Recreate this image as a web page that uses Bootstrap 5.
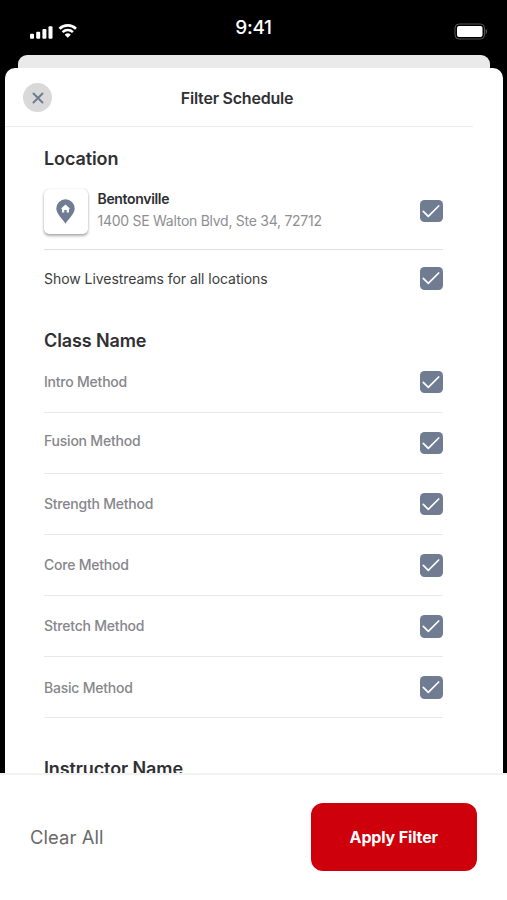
<!DOCTYPE html>
<html lang="en">
<head>
<meta charset="utf-8">
<meta name="viewport" content="width=device-width, initial-scale=1">
<title>Filter Schedule</title>
<link href="https://cdn.jsdelivr.net/npm/bootstrap@5.3.0/dist/css/bootstrap.min.css" rel="stylesheet">
<style>
body{font-family:Inter,"Liberation Sans",sans-serif;background:#000;color:#303033;height:900px}
.status{height:55px;color:#fff;padding:0 19.5px}
.status-side{flex:1 1 0}
.signals svg{margin-left:10.5px}
.clock{font-size:19px;font-weight:500;line-height:55px;letter-spacing:-.3px}
.back-sheet{height:13px;margin:0 17px 0 18px;background:#eaeaea;border-radius:9px 9px 0 0}
.sheet{height:705px;margin:0 4px 0 5px;background:#fff;border-radius:10px 10px 0 0}
.sheet-head{height:59px;width:468px;border-bottom:1.5px solid #ebebec;padding:1px 51px 0 18px}
.close-btn{width:29px;height:29px;background:#d9d9d9}
.sheet-title{font-size:16px;font-weight:600;letter-spacing:-.22px;padding-top:2px}
.sheet-body{width:437.5px;padding:21px 0 0 39px}
.section-title{font-size:18px;font-weight:600;line-height:22px;margin:0;letter-spacing:-.11px}
.class-title{margin-top:23px}
.instructor-title{padding-top:40px}
.option{height:61.1px;padding-top:1px;border-bottom:1.5px solid #e9e9ea;font-size:14px;font-weight:500;color:#86868b;line-height:20px;letter-spacing:-.22px}
.place{height:74.5px;padding-top:0;margin-top:5px;border-bottom-width:1px;border-color:#e0e0e1}
.place .tick{margin-bottom:2px}
.live{height:57px;border:0;font-weight:400;color:#3c3c40;letter-spacing:-.05px}
.place-icon{width:44px;height:45px;margin-right:9.5px;border-radius:5px;background:#fff;box-shadow:0 2px 3px rgba(0,0,0,.32),0 0 1px rgba(0,0,0,.25)}
.place-name{color:#2d2d30;font-weight:600;letter-spacing:-.33px;padding-bottom:2px}
.place-text{padding-bottom:4px}
.place-address{font-weight:400;color:#8e8e93;letter-spacing:-.27px}
.tick{width:22.5px;height:22.5px;border-radius:4.5px;background:#6f7c92}
.footer-bar{height:127px;background:#fff;border-top:2px solid #f2f2f3;padding:0 30px 2px 30px}
.clear{font-size:18.4px;color:#6a6a6a;letter-spacing:.08px}
.clear span{display:block;padding-top:2px}
.apply,.apply:hover{width:166.5px;height:68px;border-radius:12px;background:#ce000c;color:#fff;font-size:16px;font-weight:700;letter-spacing:-.15px}
</style>
</head>
<body class="overflow-hidden">
<header class="status d-flex align-items-center">
  <div class="status-side signals d-flex align-items-center pt-2">
    <svg width="50" height="16" viewBox="0 0.5 50 16" fill="#fff"><rect x="0" y="10.2" width="4" height="5" rx="1"/><rect x="6.2" y="8.200" width="4" height="7" rx="1"/><rect x="12.4" y="5.400" width="4" height="9.8" rx="1"/><rect x="18.5" y="2.700" width="4" height="12.5" rx="1"/><g transform="translate(0 -.5)"><g fill="none" stroke="#fff" stroke-width="2.600"><path d="M29.500 5.700a11.800 11.800 0 0 1 16.500 0"/><path d="M32.600 9.100a7.400 7.400 0 0 1 10.300 0"/></g><path d="M37.750 14.800L34.700 11.800a4.400 4.400 0 0 1 6.100 0z"/></g></svg>
  </div>
  <div class="clock">9:41</div>
  <div class="status-side d-flex justify-content-end pt-2"><svg class="d-block" width="34" height="18" viewBox="0 0 34 18"><rect x="1" y="1" width="29.500" height="15" rx="4" fill="none" stroke="#555" stroke-width="1"/><rect x="3" y="3" width="25.500" height="11" rx="2" fill="#fff"/><path d="M31.700 6c1.600.6 1.600 4.400 0 5z" fill="#666"/></svg></div>
</header>
<div class="back-sheet"></div>
<main class="sheet overflow-hidden">
  <div class="sheet-head d-flex align-items-center">
    <button class="close-btn btn rounded-circle p-0 border-0 d-flex align-items-center justify-content-center" aria-label="Close"><svg width="12" height="12" viewBox="0 0 12 12" fill="none" stroke="#6f7c92" stroke-width="2" stroke-linecap="round"><path d="M1.500 1.500l9 9M10.500 1.500l-9 9"/></svg></button>
    <h1 class="sheet-title mb-0 flex-grow-1 text-center">Filter Schedule</h1>
  </div>
  <div class="sheet-body">
    <h2 class="section-title">Location</h2>
    <div class="option place d-flex align-items-center">
      <div class="place-icon d-flex align-items-center justify-content-center"><svg width="20" height="26" viewBox="0.5 0.3 20 26"><path d="M10 25C7.500 20.500.8 15 .8 9.700a9.200 9.200 0 0 1 18.400 0C19.200 15 12.500 20.500 10 25z" fill="#6f7c92"/><path d="M10 5.800l4.700 4.200h-1.200v3.700h-2.300v-2.400H8.800v2.400H6.500V10H5.300z" fill="#fff"/></svg></div>
      <div class="place-text flex-grow-1"><div class="place-name">Bentonville</div><div class="place-address">1400 SE Walton Blvd, Ste 34, 72712</div></div>
      <span class="tick"><svg class="d-block" width="22" height="22" viewBox="0 0 22 22" fill="none" stroke="#fff" stroke-width="1.700" stroke-linecap="round" stroke-linejoin="round"><path d="M3.300 11.400l5 5L18.700 6"/></svg></span>
    </div>
    <div class="option live d-flex align-items-center justify-content-between"><span>Show Livestreams for all locations</span><span class="tick"><svg class="d-block" width="22" height="22" viewBox="0 0 22 22" fill="none" stroke="#fff" stroke-width="1.700" stroke-linecap="round" stroke-linejoin="round"><path d="M3.300 11.400l5 5L18.700 6"/></svg></span></div>
    <h2 class="section-title class-title">Class Name</h2>
    <div class="option d-flex align-items-center justify-content-between"><span>Intro Method</span><span class="tick"><svg class="d-block" width="22" height="22" viewBox="0 0 22 22" fill="none" stroke="#fff" stroke-width="1.700" stroke-linecap="round" stroke-linejoin="round"><path d="M3.300 11.400l5 5L18.700 6"/></svg></span></div>
    <div class="option d-flex align-items-center justify-content-between"><span class="pb-1">Fusion Method</span><span class="tick"><svg class="d-block" width="22" height="22" viewBox="0 0 22 22" fill="none" stroke="#fff" stroke-width="1.700" stroke-linecap="round" stroke-linejoin="round"><path d="M3.300 11.400l5 5L18.700 6"/></svg></span></div>
    <div class="option d-flex align-items-center justify-content-between"><span>Strength Method</span><span class="tick"><svg class="d-block" width="22" height="22" viewBox="0 0 22 22" fill="none" stroke="#fff" stroke-width="1.700" stroke-linecap="round" stroke-linejoin="round"><path d="M3.300 11.400l5 5L18.700 6"/></svg></span></div>
    <div class="option d-flex align-items-center justify-content-between"><span>Core Method</span><span class="tick"><svg class="d-block" width="22" height="22" viewBox="0 0 22 22" fill="none" stroke="#fff" stroke-width="1.700" stroke-linecap="round" stroke-linejoin="round"><path d="M3.300 11.400l5 5L18.700 6"/></svg></span></div>
    <div class="option d-flex align-items-center justify-content-between"><span>Stretch Method</span><span class="tick"><svg class="d-block" width="22" height="22" viewBox="0 0 22 22" fill="none" stroke="#fff" stroke-width="1.700" stroke-linecap="round" stroke-linejoin="round"><path d="M3.300 11.400l5 5L18.700 6"/></svg></span></div>
    <div class="option d-flex align-items-center justify-content-between"><span>Basic Method</span><span class="tick"><svg class="d-block" width="22" height="22" viewBox="0 0 22 22" fill="none" stroke="#fff" stroke-width="1.700" stroke-linecap="round" stroke-linejoin="round"><path d="M3.300 11.400l5 5L18.700 6"/></svg></span></div>
    <h2 class="section-title instructor-title">Instructor Name</h2>
  </div>
</main>
<footer class="footer-bar d-flex align-items-center justify-content-between">
  <button class="clear btn p-0 border-0"><span>Clear All</span></button>
  <button class="apply btn p-0 border-0">Apply Filter</button>
</footer>
<script src="https://cdn.jsdelivr.net/npm/bootstrap@5.3.0/dist/js/bootstrap.bundle.min.js"></script>
</body>
</html>
